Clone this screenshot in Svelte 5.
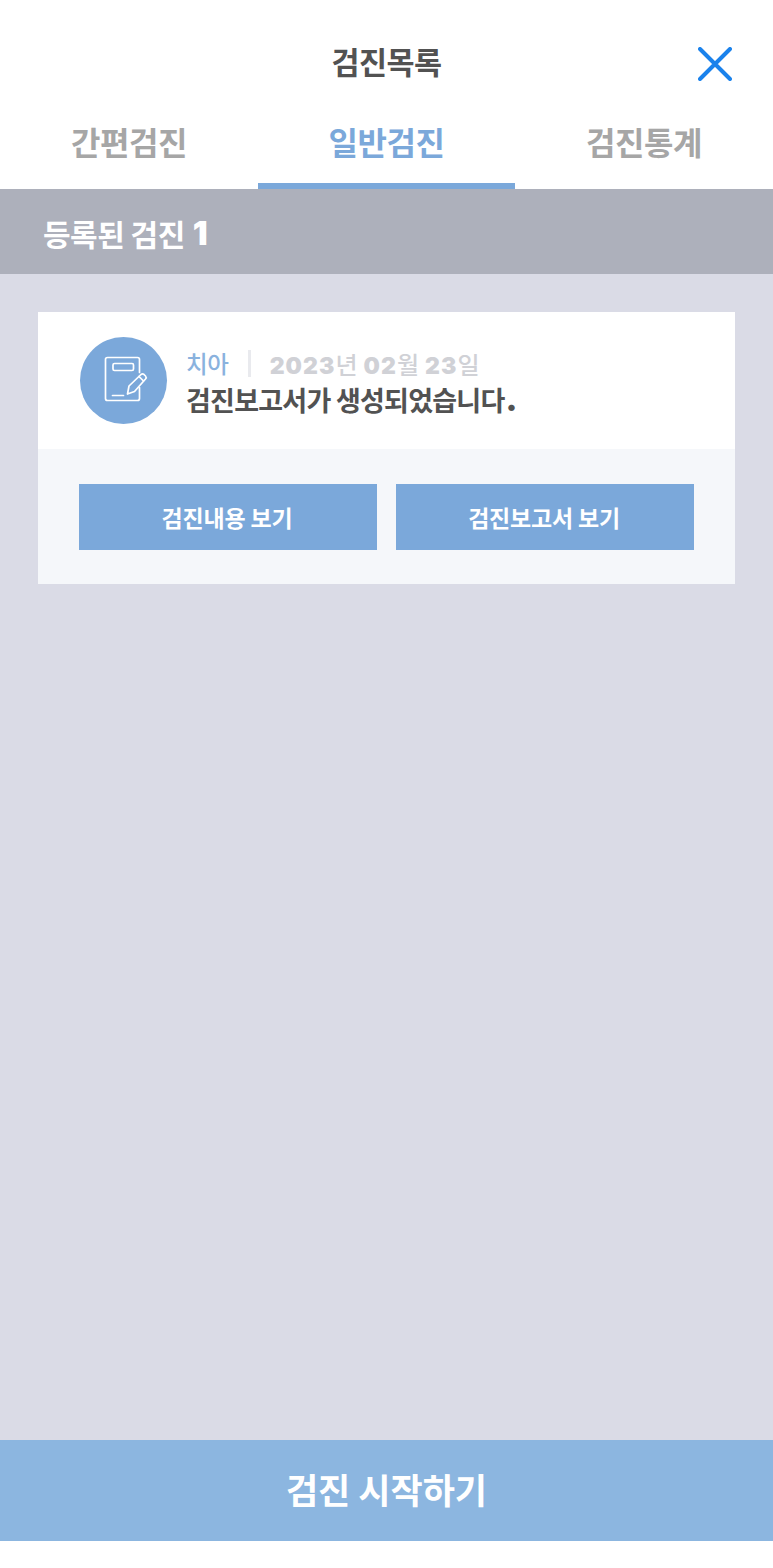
<script>
  const tabs = [
    { label: '간편검진', active: false },
    { label: '일반검진', active: true },
    { label: '검진통계', active: false }
  ];
</script>

<div class="page">
  <header class="top">
    <h1>검진목록</h1>
    <button class="close" aria-label="닫기">
      <svg viewBox="0 0 34 34" width="34" height="34"><path d="M2 2 L32 32 M32 2 L2 32" fill="none" stroke="#1a82ec" stroke-width="4" stroke-linecap="round"/></svg>
    </button>
  </header>

  <nav class="tabs">
    {#each tabs as t}
      <div class="tab" class:active={t.active}>{t.label}</div>
    {/each}
  </nav>

  <div class="count">등록된 검진 <b>1</b></div>

  <main class="list">
    <article class="card">
      <div class="info">
        <div class="avatar">
          <svg viewBox="0 0 48 48" width="48" height="48" fill="none" stroke="#fff" stroke-width="1.7" stroke-linecap="round" stroke-linejoin="round">
            <path d="M39.5 16.5 V3.5 Q39.5 1.5 37.5 1.5 H7.5 Q5.5 1.5 5.5 3.5 V42.5 Q5.5 44.5 7.5 44.5 H37.5 Q39.5 44.5 39.5 42.5 V31.5"/>
            <rect x="13" y="7.5" width="20.5" height="7" rx="1.5"/>
            <path d="M12.5 39.5 H23.5"/>
            <path d="M27.5 38 L29 30 L41 18.5 Q42.5 17.2 44 18.5 L45.5 20 Q46.8 21.4 45.5 23 L34.5 35.5 Z"/>
            <path d="M39 20.5 L43.5 25"/>
          </svg>
        </div>
        <div class="text">
          <div class="meta"><span class="kind">치아</span><i class="sep"></i><span class="date"><b>2023</b>년 <b>02</b>월 <b>23</b>일</span></div>
          <div class="msg">검진보고서가 생성되었습니다<b>.</b></div>
        </div>
      </div>
      <div class="actions">
        <button>검진내용 보기</button>
        <button>검진보고서 보기</button>
      </div>
    </article>
  </main>

  <button class="start">검진 시작하기</button>
  <div class="foot"></div>
</div>

<style>
  :global(body) { margin: 0; background: #fff; }
  .page {
    width: 773px; height: 1568px; display: flex; flex-direction: column;
    font-family: "Noto Sans CJK KR", "Noto Sans", sans-serif;
  }
  button { font-family: inherit; border: 0; padding: 0; }
  .top {
    height: 105px; flex: none; position: relative; display: flex; align-items: center; justify-content: center;
    padding-top: 17px; box-sizing: border-box; background: #fff;
  }
  h1 { margin: 0; font-size: 30.5px; font-weight: 700; color: #525252; letter-spacing: -0.6px; line-height: 44px; }
  .close { position: absolute; left: 698px; top: 47px; width: 34px; height: 34px; background: none; }
  .close svg { display: block; }
  .tabs { height: 84px; flex: none; display: grid; grid-template-columns: 258px 257px 258px; background: #fff; }
  .tab {
    display: flex; align-items: center; justify-content: center; box-sizing: border-box;
    padding-bottom: 6px; font-size: 32px; font-weight: 700; color: #a6a6a6; letter-spacing: -0.4px;
    border-bottom: 6px solid transparent;
  }
  .tab.active { color: #7ba8da; border-bottom-color: #7ba8da; }
  .count {
    height: 85px; flex: none; box-sizing: border-box; padding: 2px 0 0 43px; display: flex; align-items: center; gap: 8px;
    background: #adb0bb; color: #fff; font-size: 30px; font-weight: 700; letter-spacing: -0.5px;
  }
  .count b { font-family: Inter, sans-serif; font-size: 33px; font-weight: 900; }
  .list { flex: 1; background: #dadbe6; padding: 38px 38px 0 38px; }
  .card { width: 697px; background: #fff; }
  .info { height: 137px; display: flex; align-items: center; padding-left: 42px; box-sizing: border-box; gap: 19px; padding-bottom: 1px; }
  .avatar {
    width: 87px; height: 87px; border-radius: 50%; background: #7ba8da; display: flex; align-items: center; justify-content: center; flex: none;
  }
  .avatar svg { display: block; }
  .text { display: flex; flex-direction: column; padding-top: 4px; }
  .meta { display: flex; align-items: center; height: 36px; }
  .kind { font-size: 23.5px; font-weight: 500; color: #8ab2de; letter-spacing: -0.3px; }
  .sep { width: 3px; height: 27px; background: #e9eaee; margin: 0 19px; }
  .date { font-size: 24px; color: #d0d1d6; font-weight: 500; white-space: nowrap; letter-spacing: -1px; word-spacing: 2.5px; }
  .date b { font-family: Inter, sans-serif; font-weight: 900; font-size: 23px; letter-spacing: 1.1px; }
  .msg { font-size: 27px; font-weight: 700; color: #525252; letter-spacing: -0.75px; line-height: 38px; white-space: nowrap; }
  .msg b { font-family: Inter, sans-serif; font-weight: 900; font-size: 32px; line-height: 20px; margin-left: 1px; }
  .actions { height: 135px; background: #f5f7fa; display: flex; gap: 19px; align-items: center; justify-content: center; padding-top: 1px; box-sizing: border-box; }
  .actions button {
    width: 298px; height: 66px; background: #7ba8da; color: #fff; font-size: 23px; font-weight: 700; letter-spacing: -0.2px; padding-right: 2px;
  }
  .start { height: 101px; flex: none; background: #8cb6e0; color: #fff; font-size: 35px; font-weight: 700; letter-spacing: 0; width: 100%; padding-bottom: 5px; }
  .foot { height: 27px; flex: none; background: #fff; }
</style>
